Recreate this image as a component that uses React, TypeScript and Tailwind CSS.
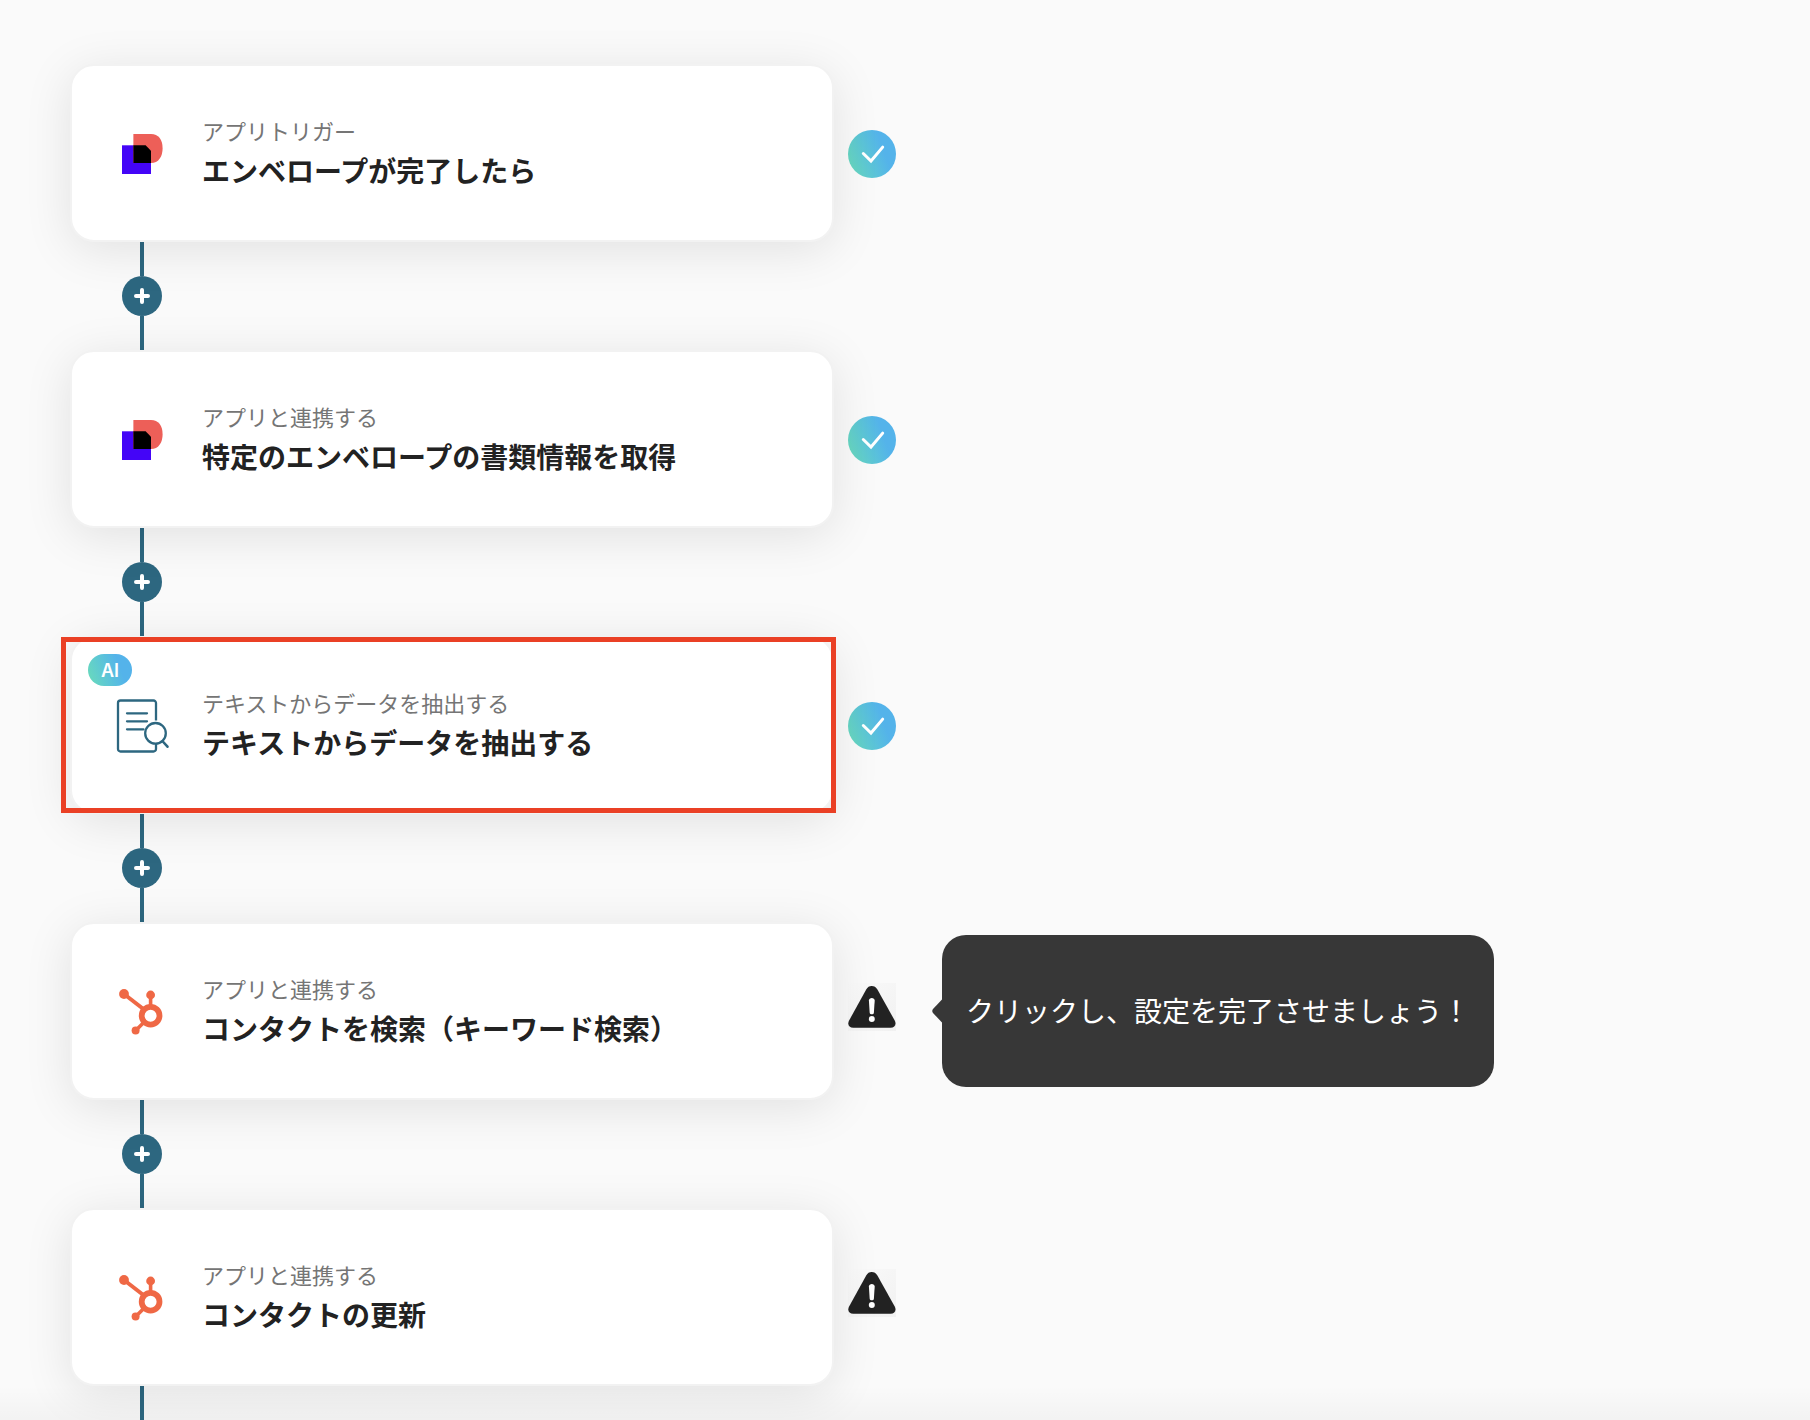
import type { ReactNode } from 'react';

type Step = {
  label: string;
  title: string;
  icon: ReactNode;
  status: 'done' | 'warning';
  ai?: boolean;
  highlighted?: boolean;
  hint?: string;
};

function DocusignIcon() {
  return (
    <svg className="h-14 w-14 shrink-0" viewBox="0 0 56 56" fill="none" aria-hidden="true">
      <path d="M8 20.3h29V49H8z" fill="#4405f7" />
      <path d="M19.4 9H37c7.4 0 11.6 5.6 11.6 14.2S44.4 38 37 38H19.4z" fill="#ed5f58" />
      <path d="M19.4 20.3H31.6L37 25.8V38H19.4z" fill="#000" />
    </svg>
  );
}

function ExtractIcon() {
  return (
    <svg className="h-14 w-14 shrink-0" viewBox="0 0 56 56" fill="none" stroke="#2d6780" strokeWidth="2.3" aria-hidden="true">
      <path d="M42 23.500V6a2.500 2.500 0 0 0-2.500-2.500H6.500A2.500 2.500 0 0 0 4 6v46a2.500 2.500 0 0 0 2.500 2.500h33A2.500 2.500 0 0 0 42 52v-5" />
      <path d="M13 16.300h20M13 24.300h20M13 32.300h16.500" strokeLinecap="round" />
      <circle cx="41.500" cy="36.300" r="10.300" />
      <path d="M48.800 44.500l4.700 5.200" strokeLinecap="round" strokeWidth="2.600" />
    </svg>
  );
}

function HubspotIcon() {
  return (
    <svg className="h-14 w-14 shrink-0" viewBox="0 0 56 56" fill="none" stroke="#ef6845" aria-hidden="true">
      <path d="M10 11l20 15.500" strokeWidth="4" />
      <path d="M36.600 12v14" strokeWidth="3.600" />
      <path d="M21.700 47.500l9-9" strokeWidth="3.600" />
      <circle cx="36.600" cy="32.700" r="8.900" strokeWidth="5.800" />
      <g fill="#ef6845" stroke="none">
        <circle cx="10" cy="11" r="4.900" />
        <circle cx="36.600" cy="12" r="4.400" />
        <circle cx="21.600" cy="47.400" r="4" />
      </g>
    </svg>
  );
}

function CheckBadge() {
  return (
    <div className="mb-16 h-12 w-12 self-end rounded-full bg-linear-70 from-[#6bdcb8] to-[#54b3ea] to-70%">
      <svg className="h-12 w-12" viewBox="0 0 48 48" fill="none" role="img" aria-label="設定済み">
        <path d="M15.300 23.500l7.700 7.500 11.700-13.900" stroke="#fff" strokeWidth="3" strokeLinecap="round" />
      </svg>
    </div>
  );
}

function WarningBadge() {
  return (
    <svg
      className="mb-[69px] h-12 w-12 self-end bg-linear-to-br from-transparent to-[#f1f1f1]"
      viewBox="0 0 48 48"
      role="img"
      aria-label="未設定"
    >
      <path
        d="M23.700 3c2.400 0 4.300 1.100 5.700 3.500l17.300 31c2 3.700.2 7.300-4.200 7.300H5.300c-4.400 0-6.200-3.600-4.200-7.300L18.200 6.500C19.600 4.100 21.300 3 23.700 3z"
        fill="#222"
      />
      <path d="M20.900 17.500c0-3.400 5.800-3.400 5.800 0l-.8 12.200c-.2 2-4 2-4.200 0z" fill="#fff" />
      <circle cx="23.800" cy="35.900" r="3" fill="#fff" />
    </svg>
  );
}

function Connector() {
  return (
    <div className="flex h-[108px] w-36 flex-col items-center">
      <div className="w-1 flex-1 bg-[#2d6780]" />
      <button
        type="button"
        aria-label="追加"
        className="flex h-10 w-10 items-center justify-center rounded-full bg-[#2d6780]"
      >
        <svg className="h-4 w-4" viewBox="0 0 16 16" fill="none" stroke="#fff" strokeWidth="4" strokeLinecap="round">
          <path d="M8 2v12M2 8h12" />
        </svg>
      </button>
      <div className="w-1 flex-1 bg-[#2d6780]" />
    </div>
  );
}

function StepCard({ step }: { step: Step }) {
  return (
    <button
      type="button"
      className="relative flex h-[178px] w-full max-w-[764px] items-center gap-8 rounded-3xl border-2 border-[#f2f2f2] bg-white pl-[42px] pr-8 text-left shadow-[0_8px_48px_rgba(0,0,0,0.1)]"
    >
      {step.ai && (
        <span className="absolute left-4 top-4 flex h-8 w-11 items-center justify-center rounded-full bg-linear-70 from-[#6bdcb8] to-[#54b3ea] to-70% font-[Inter,sans-serif] text-[18px] font-semibold text-white">
          AI
        </span>
      )}
      {step.icon}
      <span className="block pb-0.5">
        <span className="block text-[22px] leading-9 text-[#757575]">{step.label}</span>
        <span className="block text-[28px] font-bold leading-11 text-[#222222]">{step.title}</span>
      </span>
      {step.highlighted && (
        <span className="absolute -bottom-px -left-[11px] -right-1 -top-px border-5 border-[#ea4025]" />
      )}
    </button>
  );
}

function Hint({ text }: { text: string }) {
  return (
    <div className="relative ml-8 flex h-[152px] items-center self-center rounded-3xl bg-[#373737] px-6 pb-0.5">
      <svg className="absolute right-full top-1/2 h-6 w-[10px] -translate-y-1/2" viewBox="0 0 10 24" fill="#373737">
        <path d="M10 .5L1 10c-1 1.200-1 2.800 0 4l9 9.500z" />
      </svg>
      <p className="whitespace-nowrap text-[28px] text-white">{text}</p>
    </div>
  );
}

const steps: Step[] = [
  {
    label: 'アプリトリガー',
    title: 'エンベロープが完了したら',
    icon: <DocusignIcon />,
    status: 'done',
  },
  {
    label: 'アプリと連携する',
    title: '特定のエンベロープの書類情報を取得',
    icon: <DocusignIcon />,
    status: 'done',
  },
  {
    label: 'テキストからデータを抽出する',
    title: 'テキストからデータを抽出する',
    icon: <ExtractIcon />,
    status: 'done',
    ai: true,
    highlighted: true,
  },
  {
    label: 'アプリと連携する',
    title: 'コンタクトを検索（キーワード検索）',
    icon: <HubspotIcon />,
    status: 'warning',
    hint: 'クリックし、設定を完了させましょう！',
  },
  {
    label: 'アプリと連携する',
    title: 'コンタクトの更新',
    icon: <HubspotIcon />,
    status: 'warning',
  },
];

export default function App() {
  return (
    <main className="min-h-screen overflow-hidden bg-[#fafafa] pt-16 font-['Noto_Sans_CJK_JP',sans-serif]">
      {steps.map((step, i) => (
        <div key={i} className="pl-[70px]">
          <div className="flex gap-[14px]">
            <StepCard step={step} />
            {step.status === 'done' ? <CheckBadge /> : <WarningBadge />}
            {step.hint && <Hint text={step.hint} />}
          </div>
          {i < steps.length - 1 && <Connector />}
        </div>
      ))}
      {/* 次のステップへ続く線 */}
      <div className="bg-linear-to-b from-transparent to-black/3 pl-[70px]">
        <div className="flex w-36 justify-center">
          <div className="h-[34px] w-1 bg-[#2d6780]" />
        </div>
      </div>
    </main>
  );
}
